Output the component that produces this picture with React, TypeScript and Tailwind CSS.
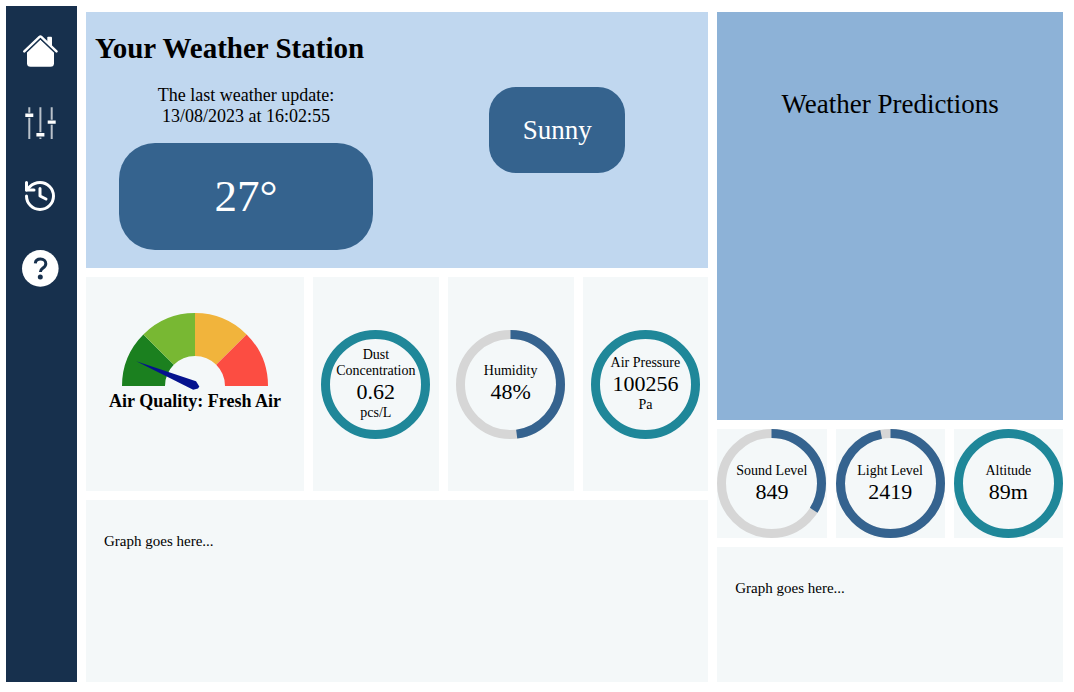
import React from "react";
import { History } from "lucide-react";

type RingProps = {
  label: string;
  value: string;
  unit?: string;
  percent?: number;
};

function Ring({ label, value, unit, percent }: RingProps) {
  const full = percent === undefined;
  return (
    <div className="grid w-[109px] shrink-0 place-items-center">
      <svg viewBox="0 0 109 109" className="col-start-1 row-start-1 block w-full" aria-hidden="true">
        <circle cx="54.5" cy="54.5" r="50" fill="none" stroke={full ? "#1f8799" : "#d6d6d6"} strokeWidth="9" />
        {!full && (
          <circle
            cx="54.5"
            cy="54.5"
            r="50"
            fill="none"
            stroke="#35638f"
            strokeWidth="9"
            pathLength="100"
            strokeDasharray={`${percent} 100`}
            transform="rotate(-90 54.5 54.5)"
          />
        )}
      </svg>
      <div className="col-start-1 row-start-1 w-20 text-center text-[14px] leading-4">
        <p>{label}</p>
        <p className="text-[22px] leading-[26px]">{value}</p>
        {unit && <p>{unit}</p>}
      </div>
    </div>
  );
}

function Card({ children }: { children: React.ReactNode }) {
  return <div className="flex items-center justify-center bg-[#f4f8f9]">{children}</div>;
}

function HomeIcon() {
  return (
    <svg viewBox="0 0 36 36" className="size-9" aria-hidden="true">
      <path d="M18.4 5.6 32 18.4v10.8a3.5 3.5 0 0 1-3.5 3.5h-20A3.5 3.5 0 0 1 5 29.2V18.4z" fill="#fff" />
      <path d="M2.3 17.4 18.4 2.3 34.5 17.4" fill="none" stroke="#17304d" strokeWidth="4.8" />
      <path d="M25.3 3.6q0-.9.9-.9h2.9q.9 0 .9.9v9.6l-4.700-4.400z" fill="#fff" />
      <path
        d="M2.3 17.4 17.5 2.9q.9-.8 1.8 0L34.5 17.4"
        fill="none"
        stroke="#fff"
        strokeWidth="2.4"
        strokeLinecap="round"
      />
    </svg>
  );
}

function SlidersIcon() {
  return (
    <svg viewBox="0 0 36 36" className="size-9" aria-hidden="true">
      <path
        d="M7.3 1.3v5.4M7.3 11.7V33M18.4 1.3v25M18.4 31.4V33M29.7 1.3v12.4M29.7 18.7V33"
        stroke="#b9c1ca"
        strokeWidth="2"
      />
      <path d="M3.3 7.5h8v3.4h-8zM14.4 27.1h8v3.4h-8zM25.7 14.4h8v3.4h-8z" fill="#fff" />
    </svg>
  );
}

function HelpIcon() {
  return (
    <svg viewBox="0 0 36 36" className="size-9 overflow-visible" aria-hidden="true">
      <circle cx="18.3" cy="18.4" r="18.3" fill="#fff" />
      <path
        d="M13.3 13.3C13.6 10.4 15.6 9.1 18.5 9.1c3.2 0 5.3 1.9 5.3 4.6 0 2.3-1.4 3.4-3.1 4.6-1.7 1.2-2.3 2-2.3 3.7"
        fill="none"
        stroke="#17304d"
        strokeWidth="3"
        strokeLinecap="butt"
      />
      <circle cx="18.3" cy="27" r="2.5" fill="#17304d" />
    </svg>
  );
}

function Gauge() {
  return (
    <svg viewBox="0 0 146 77" className="block h-[77px] w-[146px]" aria-hidden="true">
      <path d="M0 73A73 73 0 0 1 21.38 21.38L51.79 51.79A30 30 0 0 0 43 73z" fill="#1b801f" />
      <path d="M21.38 21.38A73 73 0 0 1 73 0V43A30 30 0 0 0 51.79 51.79z" fill="#78b833" />
      <path d="M73 0A73 73 0 0 1 124.62 21.38L94.21 51.79A30 30 0 0 0 73 43z" fill="#f1b43c" />
      <path d="M124.62 21.38A73 73 0 0 1 146 73H103A30 30 0 0 0 94.21 51.79z" fill="#fc4d42" />
      <path d="M14.3 48.2 74 68.3 77.3 73.5 76 75.6 71.2 76.7z" fill="#05128e" />
    </svg>
  );
}

const navItems = [
  { name: "Home", icon: <HomeIcon /> },
  { name: "Settings", icon: <SlidersIcon /> },
  { name: "History", icon: <History className="size-9" strokeWidth={2} aria-hidden="true" /> },
  { name: "Help", icon: <HelpIcon /> },
];

export default function App() {
  return (
    <div className="grid min-h-screen grid-cols-[71px_9fr_5fr] gap-x-[9px] bg-white pt-1.5 pr-[11px] pb-2.5 pl-1.5 font-['Liberation_Serif','Times_New_Roman',serif] text-black">
      <nav aria-label="Main" className="flex flex-col items-start gap-9 bg-[#17304d] pt-7 pl-4 text-white">
        {navItems.map((item) => (
          <a key={item.name} href="#" aria-label={item.name} className="block">
            {item.icon}
          </a>
        ))}
      </nav>

      <main className="flex flex-col gap-[9px] pt-1.5">
        <section className="bg-[#c0d7ef] pt-5 pb-[18px]">
          <h1 className="pl-[9px] text-[29px] leading-[33px] font-bold">Your Weather Station</h1>
          <div className="mt-5 grid grid-cols-[18fr_17fr] items-start justify-items-center">
            <div className="flex flex-col items-center gap-4">
              <p className="text-center text-[18px] leading-[21px]">
                The last weather update:
                <br />
                13/08/2023 at 16:02:55
              </p>
              <div className="flex h-[107px] w-[254px] items-center justify-center rounded-[36px] bg-[#35638e] text-[45px] text-white">
                27°
              </div>
            </div>
            <div className="mt-0.5 flex h-[86px] w-[136px] items-center justify-center rounded-[27px] bg-[#35638e] text-[27px] text-white">
              Sunny
            </div>
          </div>
        </section>

        <section className="grid min-h-[214px] grid-cols-[26fr_15fr_15fr_15fr] gap-[9px]">
          <div className="flex flex-col items-center bg-[#f4f8f9] pt-9">
            <Gauge />
            <h2 className="text-[18px] leading-[23px] font-bold">Air Quality: Fresh Air</h2>
          </div>
          <Card>
            <Ring label="Dust Concentration" value="0.62" unit="pcs/L" />
          </Card>
          <Card>
            <Ring label="Humidity" value="48%" percent={48} />
          </Card>
          <Card>
            <Ring label="Air Pressure" value="100256" unit="Pa" />
          </Card>
        </section>

        <section className="flex-1 bg-[#f4f8f9] px-[18px] py-[33px]">
          <p className="text-[15px] leading-[17px]">Graph goes here...</p>
        </section>
      </main>

      <aside className="flex flex-col gap-[9px] pt-1.5">
        <section className="flex-1 bg-[#8db2d7] pt-[77px] text-center">
          <h2 className="text-[27px] leading-[31px]">Weather Predictions</h2>
        </section>
        <section className="grid grid-cols-3 gap-[9px]">
          <Card>
            <Ring label="Sound Level" value="849" percent={34} />
          </Card>
          <Card>
            <Ring label="Light Level" value="2419" percent={97} />
          </Card>
          <Card>
            <Ring label="Altitude" value="89m" />
          </Card>
        </section>
        <section className="min-h-[135px] bg-[#f4f8f9] px-[18px] py-[33px]">
          <p className="text-[15px] leading-[17px]">Graph goes here...</p>
        </section>
      </aside>
    </div>
  );
}
